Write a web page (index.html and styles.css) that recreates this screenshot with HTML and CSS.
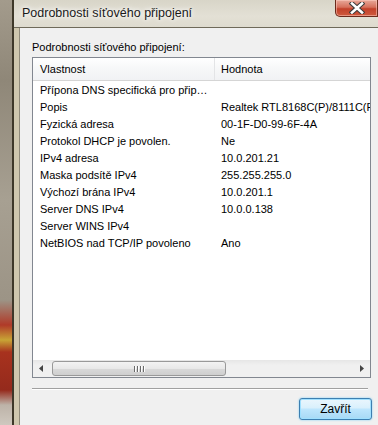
FILE: index.html
```html
<!DOCTYPE html>
<html lang="cs">
<head>
    <meta charset="UTF-8">
    <meta name="viewport" content="width=device-width, initial-scale=1.0">
    <title>Podrobnosti síťového připojení</title>
    <link rel="stylesheet" href="styles.css">
</head>

<body>
    <div class="screen">
        <div class="desktop"></div>

        <div class="window">
            <!-- titulek okna -->
            <div class="titlebar">
                <span class="title">Podrobnosti síťového připojení</span>
                <div class="close-btn">
                    <svg width="16" height="12" viewBox="0 0 16 12">
                        <path d="M3 1.5 L13 10.5 M13 1.5 L3 10.5" stroke="#3a3a3a" stroke-width="4.6" stroke-linecap="square"/>
                        <path d="M3 1.5 L13 10.5 M13 1.5 L3 10.5" stroke="#ffffff" stroke-width="2.6" stroke-linecap="square"/>
                    </svg>
                </div>
            </div>

            <div class="client">
                <div class="caption">Podrobnosti síťového připojení:</div>

                <div class="listview">
                    <div class="lv-header">
                        <div class="hcol hcol-name">Vlastnost</div>
                        <div class="hcol hcol-value">Hodnota</div>
                    </div>

                    <div class="lv-body">
                        <div class="row"><span class="cell-name">Přípona DNS specifická pro připojení</span><span class="cell-value"></span></div>
                        <div class="row"><span class="cell-name">Popis</span><span class="cell-value">Realtek RTL8168C(P)/8111C(P) Family PCI-E Gigabit Ethernet NIC</span></div>
                        <div class="row"><span class="cell-name">Fyzická adresa</span><span class="cell-value">00-1F-D0-99-6F-4A</span></div>
                        <div class="row"><span class="cell-name">Protokol DHCP je povolen.</span><span class="cell-value">Ne</span></div>
                        <div class="row"><span class="cell-name">IPv4 adresa</span><span class="cell-value">10.0.201.21</span></div>
                        <div class="row"><span class="cell-name">Maska podsítě IPv4</span><span class="cell-value">255.255.255.0</span></div>
                        <div class="row"><span class="cell-name">Výchozí brána IPv4</span><span class="cell-value">10.0.201.1</span></div>
                        <div class="row"><span class="cell-name">Server DNS IPv4</span><span class="cell-value">10.0.0.138</span></div>
                        <div class="row"><span class="cell-name">Server WINS IPv4</span><span class="cell-value"></span></div>
                        <div class="row"><span class="cell-name">NetBIOS nad TCP/IP povoleno</span><span class="cell-value">Ano</span></div>
                    </div>

                    <!-- vodorovný posuvník -->
                    <div class="hscroll">
                        <div class="sb-arrow">
                            <svg width="5" height="7" viewBox="0 0 5 7"><path d="M4 0 L4 7 L0 3.5 Z" fill="#444"/></svg>
                        </div>
                        <div class="sb-track">
                            <div class="sb-thumb">
                                <span class="grip"></span><span class="grip"></span><span class="grip"></span><span class="grip"></span>
                            </div>
                        </div>
                        <div class="sb-arrow">
                            <svg width="5" height="7" viewBox="0 0 5 7"><path d="M1 0 L1 7 L5 3.5 Z" fill="#444"/></svg>
                        </div>
                    </div>
                </div>

                <div class="separator"></div>

                <div class="button-row">
                    <button class="btn-close">Zavřít</button>
                </div>
            </div>
        </div>
    </div>
</body>
</html>
```

FILE: styles.css
```css
body {
    margin: 0;
    width: 378px;
    height: 425px;
    overflow: hidden;
    font-family: 'Liberation Sans', Arial, sans-serif;
    font-size: 11px;
    color: #000;
}

.screen {
    display: flex;
    height: 425px;
}

.desktop {
    width: 12px;
    flex-shrink: 0;
    background: linear-gradient(to bottom,
        #a39b8c 0px, #8f8778 80px, #a7a092 200px, #9c9486 300px,
        #b03a28 325px, #c8a435 340px, #a8321e 352px, #952a1c 390px,
        #bdb3a8 405px, #cfc8bf 425px);
}

.window {
    flex: 1;
    display: flex;
    flex-direction: column;
    border-left: 2px solid #3e3829;
    background: #cfc7ae;
}

.titlebar {
    height: 27px;
    display: flex;
    justify-content: space-between;
    align-items: flex-start;
    background: linear-gradient(to bottom, #d8d5c8, #e3e0d5 60%, #dedbcf);
    border-bottom: 1px solid #6f6a5a;
}

.title {
    margin: 6px 0 0 8px;
    font-size: 12.5px;
    color: #1a1a1a;
    text-shadow: 0 0 4px #ffffff, 0 0 6px #ffffff;
}

.close-btn {
    width: 43px;
    height: 17px;
    display: flex;
    justify-content: center;
    align-items: center;
    box-sizing: border-box;
    border: 1px solid #6b2a1c;
    border-top: none;
    border-radius: 0 0 0 5px;
    background: linear-gradient(to bottom, #e8a89a 0%, #d6705c 45%, #c2402a 55%, #cf5a3e 100%);
    box-shadow: inset 0 0 0 1px rgba(255, 210, 200, 0.5);
}

.client {
    flex: 1;
    margin-left: 5px;
    border-left: 1px solid #8f8a7a;
    background: #f0f0f0;
    padding: 12px 0 0 12px;
}

.caption {
    line-height: 15px;
    height: 15px;
    margin-bottom: 2px;
}

.listview {
    width: 337px;
    height: 319px;
    border: 1px solid #828790;
    background: #ffffff;
    display: flex;
    flex-direction: column;
}

.lv-header {
    height: 22px;
    display: flex;
    background: linear-gradient(to bottom, #ffffff, #f6f7f8 50%, #f1f2f4);
    border-bottom: 1px solid #d5d5d5;
}

.hcol {
    line-height: 22px;
    white-space: nowrap;
    overflow: hidden;
}

.hcol-name {
    width: 174px;
    padding-left: 7px;
    border-right: 1px solid #e3e4e6;
}

.hcol-value {
    flex: 1;
    padding-left: 6px;
}

.lv-body {
    flex: 1;
    padding-top: 1px;
}

.row {
    display: flex;
    height: 17px;
    line-height: 17px;
    white-space: nowrap;
}

.cell-name {
    width: 171px;
    padding: 0 4px 0 7px;
    overflow: hidden;
    text-overflow: ellipsis;
}

.cell-value {
    flex: 1;
    padding-left: 6px;
    overflow: hidden;
}

.hscroll {
    height: 17px;
    display: flex;
    background: linear-gradient(to bottom, #e6e6e6, #f0f0f0 30%, #f0f0f0);
}

.sb-arrow {
    width: 17px;
    display: flex;
    justify-content: center;
    align-items: center;
}

.sb-track {
    flex: 1;
    display: flex;
    align-items: center;
}

.sb-thumb {
    width: 174px;
    height: 15px;
    margin-left: 2px;
    box-sizing: border-box;
    border: 1px solid #999999;
    border-radius: 3px;
    background: linear-gradient(to bottom, #f3f3f3, #e8e8e8 50%, #d9d9d9 51%, #cfcfcf);
    display: flex;
    justify-content: center;
    align-items: center;
    gap: 1px;
}

.grip {
    width: 1px;
    height: 6px;
    background: #6a6a6a;
    border-right: 1px solid #ffffff;
}

.separator {
    width: 336px;
    margin-top: 10px;
    border-top: 1px solid #a0a0a0;
    border-bottom: 1px solid #ffffff;
}

.button-row {
    width: 340px;
    display: flex;
    justify-content: flex-end;
    margin-top: 8px;
}

.btn-close {
    width: 73px;
    height: 22px;
    font-family: 'Liberation Sans', Arial, sans-serif;
    font-size: 12px;
    color: #000;
    border: 1px solid #3c7fb1;
    border-radius: 3px;
    background: linear-gradient(to bottom, #eaf6fd 0%, #d9f0fc 45%, #bee6fd 50%, #a7d9f5 100%);
    box-shadow: inset 0 0 0 1px #9fe0ff, 0 0 2px #6cc9f5;
    padding: 0;
}
```
